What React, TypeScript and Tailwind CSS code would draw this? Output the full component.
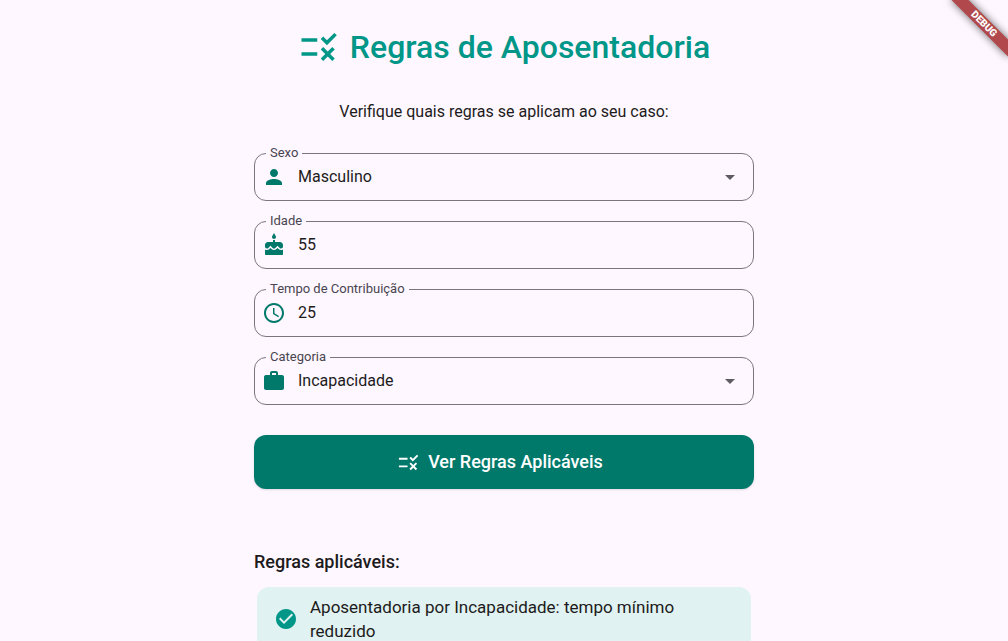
import { useState, type ReactNode } from "react";
import {
  MdAccessTime,
  MdArrowDropDown,
  MdCake,
  MdCheckCircle,
  MdPerson,
  MdRule,
  MdWork,
} from "react-icons/md";

type FieldProps = { id: string; label: string; icon: ReactNode; children: ReactNode };

function Field({ id, label, icon, children }: FieldProps) {
  return (
    <fieldset className="min-w-0 rounded-xl border border-[#7a757f] pl-[11px] focus-within:border-[#00796b]">
      <legend className="h-4 px-1 text-[13px] leading-4 text-[#49454f]">
        <label htmlFor={id}>{label}</label>
      </legend>
      <div className="-ml-1 -mt-2 flex h-[47px] items-center gap-3 text-2xl text-[#00796b]">
        {icon}
        {children}
      </div>
    </fieldset>
  );
}

const controlClass =
  "h-full w-full min-w-0 appearance-none bg-transparent text-base leading-6 text-[#1d1b20] outline-none";

type SelectProps = {
  id: string;
  value: string;
  options: string[];
  onChange: (value: string) => void;
};

function Select({ id, value, options, onChange }: SelectProps) {
  return (
    <div className="relative h-full min-w-0 grow">
      <select
        id={id}
        value={value}
        onChange={(e) => onChange(e.target.value)}
        className={controlClass}
      >
        {options.map((o) => (
          <option key={o}>{o}</option>
        ))}
      </select>
      <MdArrowDropDown className="pointer-events-none absolute inset-y-0 right-[11px] my-auto text-[#5f5c61]" />
    </div>
  );
}

function DebugBanner() {
  return (
    <div className="pointer-events-none absolute right-0 top-0 size-20 overflow-hidden">
      <div className="absolute -right-4 top-[18px] flex h-3 w-20 rotate-45 items-center justify-center bg-[#b0484c] text-[10px] font-black leading-3 text-white shadow-[0_0_8px_rgba(0,0,0,0.6)]">
        DEBUG
      </div>
    </div>
  );
}

export default function App() {
  const [sexo, setSexo] = useState("Masculino");
  const [idade, setIdade] = useState("55");
  const [tempo, setTempo] = useState("25");
  const [categoria, setCategoria] = useState("Incapacidade");

  return (
    <div className="relative h-screen overflow-hidden bg-[#fef7ff] font-['Roboto',sans-serif] text-[#1d1b20]">
      <main className="mx-auto flex max-w-[500px] flex-col pt-6">
        <h1 className="flex items-center justify-center gap-2.5 text-[32px] font-medium leading-[46px] text-[#009688]">
          <MdRule className="size-[42px] shrink-0" />
          Regras de Aposentadoria
        </h1>
        <p className="mt-[30px] text-center text-base leading-6">
          Verifique quais regras se aplicam ao seu caso:
        </p>

        <form className="mt-[21px] flex flex-col" onSubmit={(e) => e.preventDefault()}>
          <div className="flex flex-col gap-3">
            <Field id="sexo" label="Sexo" icon={<MdPerson className="shrink-0" />}>
              <Select
                id="sexo"
                value={sexo}
                options={["Masculino", "Feminino"]}
                onChange={setSexo}
              />
            </Field>
            <Field id="idade" label="Idade" icon={<MdCake className="shrink-0" />}>
              <input
                id="idade"
                inputMode="numeric"
                value={idade}
                onChange={(e) => setIdade(e.target.value)}
                className={controlClass}
              />
            </Field>
            <Field
              id="tempo"
              label="Tempo de Contribuição"
              icon={<MdAccessTime className="shrink-0" />}
            >
              <input
                id="tempo"
                inputMode="numeric"
                value={tempo}
                onChange={(e) => setTempo(e.target.value)}
                className={controlClass}
              />
            </Field>
            <Field id="categoria" label="Categoria" icon={<MdWork className="shrink-0" />}>
              <Select
                id="categoria"
                value={categoria}
                options={["Incapacidade", "Idade", "Especial"]}
                onChange={setCategoria}
              />
            </Field>
          </div>
          <button
            type="submit"
            className="mt-[30px] flex h-[54px] items-center justify-center gap-2 rounded-xl bg-[#00796b] pr-2 text-lg font-medium text-white shadow-sm"
          >
            <MdRule className="size-[23px] shrink-0" />
            Ver Regras Aplicáveis
          </button>
        </form>

        <section className="mt-[61px]">
          <h2 className="text-lg font-medium leading-6">Regras aplicáveis:</h2>
          <ul className="mt-[13px] px-[3px]">
            <li className="flex items-center gap-3 rounded-xl bg-[#e0f2f1] py-2 pl-[17px] pr-6 text-[17px] leading-6">
              <MdCheckCircle className="size-6 shrink-0 text-[#009688]" />
              <span>Aposentadoria por Incapacidade: tempo mínimo reduzido</span>
            </li>
          </ul>
        </section>
      </main>
      <DebugBanner />
    </div>
  );
}
